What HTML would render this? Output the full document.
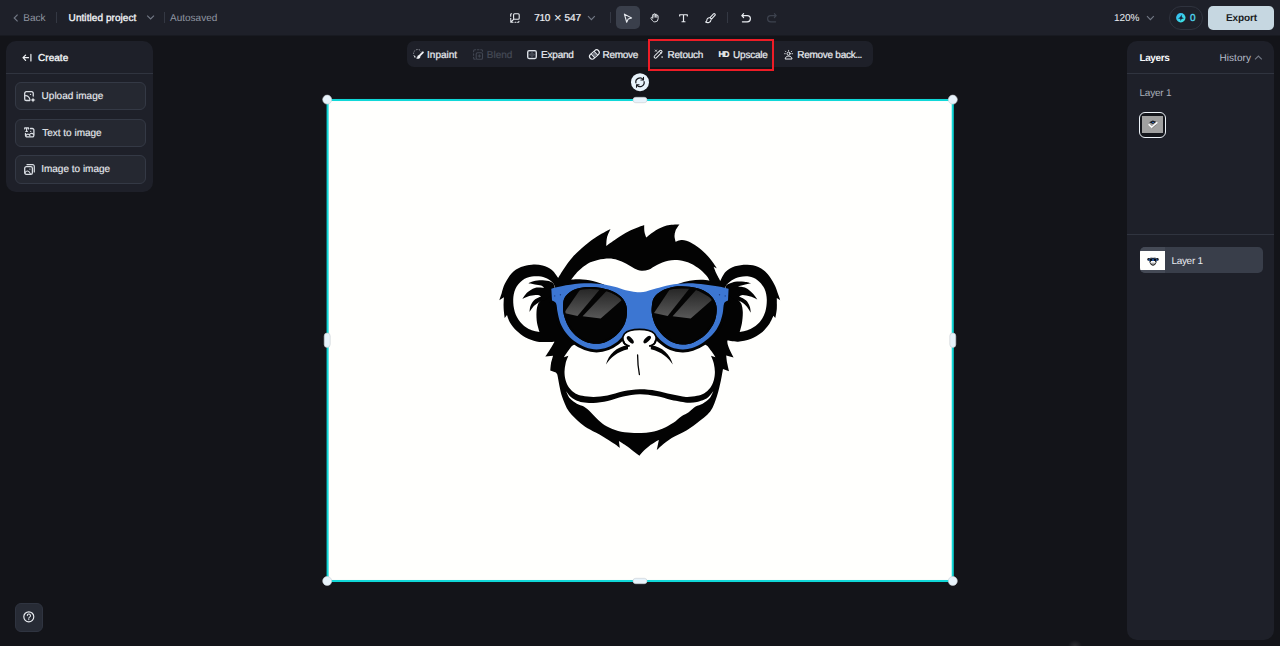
<!DOCTYPE html>
<html lang="en"><head><meta charset="utf-8"><title>Editor</title>
<style>
*{box-sizing:border-box;margin:0;padding:0}
html,body{width:1280px;height:646px;overflow:hidden;background:#131419;font-family:"Liberation Sans",sans-serif;color:#e6e9ef;font-size:10px;text-rendering:geometricPrecision}
.abs{position:absolute}
#top{position:absolute;left:0;top:0;width:1280px;height:35px;background:#1e2029}
.t{position:absolute;white-space:nowrap;line-height:12px;font-size:10px}
.sb{-webkit-text-stroke:0.35px currentColor}
.m{-webkit-text-stroke:0.22px currentColor}
.panel{position:absolute;background:#1e2029;border-radius:10px}
.btn{position:absolute;left:15px;width:131px;height:28px;border:1px solid #343945;border-radius:6px;background:#252831}
.btn .t{left:26.5px;top:7.5px;color:#e6e9ee;-webkit-text-stroke:0.15px currentColor}
.btn svg{position:absolute;left:8.5px;top:8px}
svg{display:block;overflow:visible;position:absolute}
.ic{fill:none;stroke:#e9ecf1;stroke-width:1.15;stroke-linecap:round;stroke-linejoin:round}
.tb{position:absolute;top:49.7px;color:#e9ecf1}
</style></head><body>
<div id="top">
  <svg style="left:12px;top:12.7px" width="8" height="10" viewBox="0 0 8 10"><path d="M5.6 1.6L2.2 5l3.4 3.4" fill="none" stroke="#727885" stroke-width="1.15"/></svg>
  <div class="t" style="left:23.3px;top:12.9px;color:#9096a2">Back</div>
  <div class="abs" style="left:56px;top:12px;width:1px;height:11px;background:#343843"></div>
  <div class="t sb" style="left:68.6px;top:12.9px;color:#f1f3f6;letter-spacing:0.07px">Untitled project</div>
  <svg style="left:146px;top:14px" width="9" height="7" viewBox="0 0 9 7"><path d="M1.2 1.6l3.4 3.4L8 1.6" fill="none" stroke="#727885" stroke-width="1.15"/></svg>
  <div class="abs" style="left:164px;top:12px;width:1px;height:11px;background:#343843"></div>
  <div class="t" style="left:170px;top:12.9px;color:#9096a2">Autosaved</div>

  <!-- center tools -->
  <svg style="left:510px;top:12.5px" width="10" height="10" viewBox="0 0 10 10"><g class="ic" style="stroke-width:1.1"><rect x="3.6" y="0.7" width="5.6" height="5.6" rx="1"/><path d="M0.7 3.2V1.6a.9.9 0 0 1 .9-.9M0.7 5.2v1M8.9 8.2v.4a.7.7 0 0 1-.7.7h-.6M5 9.3h1" /><path d="M3.6 6.4L0.9 9.1M0.8 7v2.2H3" /></g></svg>
  <div class="t m" style="left:534.3px;top:12.9px;color:#eef0f4;letter-spacing:-0.35px">710</div><div class="t" style="left:554px;top:12.3px;color:#eef0f4;font-size:13px">×</div><div class="t m" style="left:564.6px;top:12.9px;color:#eef0f4;letter-spacing:-0.05px">547</div>
  <svg style="left:587px;top:15px" width="9" height="7" viewBox="0 0 9 7"><path d="M1 1.2l3.4 3.4L7.8 1.2" fill="none" stroke="#727885" stroke-width="1.15"/></svg>
  <div class="abs" style="left:610px;top:12px;width:1px;height:11px;background:#343843"></div>
  <div class="abs" style="left:616px;top:6px;width:24px;height:23px;border-radius:5px;background:#3a3f4b"></div>
  <svg style="left:623px;top:12.5px" width="10" height="10.4" viewBox="0 0 10 11"><path class="ic" d="M1.2 1.2L8.8 5.2L5.2 6.3L3.6 9.8Z"/></svg>
  <svg style="left:649.7px;top:13px" width="9.6" height="9.6" viewBox="0 0 11 11"><path class="ic" style="stroke-width:1.05" d="M3 5.6V2.4a.8.8 0 0 1 1.6 0V1.6a.8.8 0 0 1 1.6 0v.6a.8.8 0 0 1 1.6 0v1a.8.8 0 0 1 1.5 0v3.4a3.6 3.6 0 0 1-3.6 3.6H5.4A3 3 0 0 1 2.9 8.8L1.1 6.2a.8.8 0 0 1 1.3-.9L3 6M4.6 2.4v2.4M6.2 2.2v2.6M7.8 3.2v1.8"/></svg>
  <svg style="left:679px;top:13.8px" width="9" height="8.4" viewBox="0 0 9 9" preserveAspectRatio="none"><path class="ic" style="stroke-width:1.2" d="M0.7 2.2V0.8H8.3V2.2M4.5 0.8V8.3M3 8.3H6"/></svg>
  <svg style="left:705px;top:12.5px" width="11" height="11" viewBox="0 0 11 11"><g class="ic" style="stroke-width:1.1"><path d="M9.9 0.9a1 1 0 0 0-1.4 0L5 4.6l1.5 1.5L9.9 2.4a1 1 0 0 0 0-1.5z"/><path d="M4.6 4.8C3 4.6 1.9 5.6 1.9 7c0 1.2-.7 1.8-1.3 2.1 1.6.8 5.4.8 5.4-2.3"/></g></svg>
  <div class="abs" style="left:727px;top:12px;width:1px;height:11px;background:#343843"></div>
  <svg style="left:740.5px;top:12.7px" width="10" height="10" viewBox="0 0 10 10"><path class="ic" style="stroke-width:1.2" d="M2.6 0.7L0.8 2.6L2.6 4.5M1 2.6H6.3a3.1 3.1 0 0 1 0 6.2H1.4"/></svg>
  <svg style="left:766.5px;top:12.7px" width="10" height="10" viewBox="0 0 10 10"><path class="ic" style="stroke-width:1.2;stroke:#3d424e" d="M7.4 0.7L9.2 2.6L7.4 4.5M9 2.6H3.7a3.1 3.1 0 0 0 0 6.2H8.6"/></svg>

  <!-- right -->
  <div class="t" style="left:1114px;top:12.9px;color:#e9ecf1;letter-spacing:-0.1px">120%</div>
  <svg style="left:1145.5px;top:14.5px" width="9" height="7" viewBox="0 0 9 7"><path d="M1 1.2l3.4 3.4L7.8 1.2" fill="none" stroke="#727885" stroke-width="1.15"/></svg>
  <div class="abs" style="left:1168.5px;top:6px;width:34.5px;height:23.5px;border:1px solid #2f333e;border-radius:12px"></div>
  <svg style="left:1176px;top:12.8px" width="10" height="10" viewBox="0 0 10 10"><defs><linearGradient id="cg" x1="0" y1="0" x2="1" y2="1"><stop offset="0" stop-color="#35b6f5"/><stop offset="1" stop-color="#3eeae0"/></linearGradient></defs><circle cx="4.8" cy="4.8" r="4.7" fill="url(#cg)"/><path d="M5.6 1.8L5.9 4.2L8 5.2L5.6 5.9L4.6 8L4.2 5.8L2 5.4L4 4.2Z" fill="#16233a"/></svg>
  <div class="t sb" style="left:1190px;top:12.9px;color:#4fd3ec">0</div>
  <div class="abs" style="left:1208px;top:6px;width:66px;height:23.5px;border-radius:5px;background:#c6d7e1"></div>
  <div class="t" style="left:1226px;top:12.9px;color:#1a1d24;font-weight:bold;font-size:10px;letter-spacing:-0.1px">Export</div>
</div>

<div class="abs" style="left:0;top:35px;width:1280px;height:1px;background:#181a21"></div>
<!-- left panel -->
<div class="panel" style="left:6px;top:41px;width:147px;height:151px"></div>
<svg style="left:21.5px;top:53px" width="10" height="10" viewBox="0 0 10 10"><path class="ic" style="stroke-width:1.2;stroke:#f1f3f6" d="M3.6 2.1L1 4.7L3.6 7.3M1.2 4.7H6.5M8.9 1.4V8"/></svg>
<div class="t sb" style="left:38px;top:53px;color:#f4f6f8;letter-spacing:0.05px">Create</div>
<div class="abs" style="left:6px;top:73px;width:147px;height:1px;background:#30343f"></div>
<div class="btn" style="top:82px"><svg style="left:7.8px;top:7.6px" width="11" height="11" viewBox="0 0 11 11"><g class="ic" style="stroke-width:1.3;stroke:#d9dde3"><path d="M9.25 5V2.3A1.6 1.6 0 0 0 7.65.7H2.3A1.6 1.6 0 0 0 .7 2.3v5.6A1.6 1.6 0 0 0 2.3 9.5h3.4"/><path d="M1 4.8C3.2 4.2 5.4 5.8 6 8.8" stroke-width="1.15"/><circle cx="6.5" cy="3.4" r=".7" fill="#d9dde3" stroke="none"/><path d="M9 6.5L9.7 8.3L11.5 9L9.7 9.7L9 11.5L8.3 9.7L6.5 9L8.3 8.3Z" fill="#eef1f5" stroke="none"/></g></svg><div class="t" style="left:25.6px;top:8.1px">Upload image</div></div>
<div class="btn" style="top:119px"><svg style="left:7.8px;top:6.9px" width="11" height="11" viewBox="0 0 11 11"><g class="ic" style="stroke-width:1.3;stroke:#d9dde3"><path d="M.7 1.9V.9H4.5V1.9M2.6.9V4.5M1.8 4.5H3.4" stroke-width="1.2"/><path d="M6.4 1.5H8.3A1.6 1.6 0 0 1 9.9 3.1V8.3A1.6 1.6 0 0 1 8.3 9.9H3.1A1.6 1.6 0 0 1 1.5 8.3V6.4"/><path d="M1.8 8.6C3 6.6 4.8 6.6 6 8.8M5.4 7.6C6.6 6 8.4 6 9.6 7.4" stroke-width="1.1"/><circle cx="6.7" cy="4.3" r=".65" fill="#d9dde3" stroke="none"/></g></svg><div class="t" style="left:26.2px;top:8px">Text to image</div></div>
<div class="btn" style="top:155px;height:28.5px"><svg style="left:7.8px;top:8px" width="11" height="11" viewBox="0 0 11 11"><g class="ic" style="stroke-width:1.3;stroke:#d9dde3"><rect x=".7" y="2.7" width="7.7" height="7.6" rx="1.6"/><path d="M3 .7H8.6A1.7 1.7 0 0 1 10.3 2.4V8" stroke-width="1.2"/><path d="M1 8.6C2.6 6.2 5 6.4 6.4 9.9" stroke-width="1.1"/><circle cx="5.9" cy="5.1" r=".65" fill="#d9dde3" stroke="none"/></g></svg><div class="t" style="left:25.2px;top:8.4px">Image to image</div></div>

<!-- toolbar -->
<div class="abs" style="left:407px;top:41px;width:466px;height:26px;border-radius:7px;background:#1e2029"></div>
<svg style="left:413px;top:48.8px" width="11" height="11" viewBox="0 0 11 11"><circle cx="4.7" cy="4.6" r="4.1" fill="none" stroke="#c4c8d0" stroke-width="1" stroke-dasharray="1 1.5"/><path d="M9.9 3.2L5.2 8.2" stroke="#1e2029" stroke-width="3.2" stroke-linecap="round"/><path d="M9.9 3.3L6.9 6.3" stroke="#f1f3f6" stroke-width="1.9" stroke-linecap="round"/><path d="M6.7 6.1C5.4 5.9 4.3 6.8 4.3 8C4.3 8.7 3.7 9.2 3.1 9.4C4.7 10.2 7.6 9.7 7.4 7.2Z" fill="#f1f3f6"/><circle cx="1.7" cy="7.7" r=".7" fill="#f1f3f6"/></svg>
<div class="t tb m" style="left:427px;letter-spacing:0.02px">Inpaint</div>
<svg style="left:472.7px;top:48.8px" width="10" height="11" viewBox="0 0 10 11"><g class="ic" style="stroke-width:1.1;stroke:#414652"><path d="M2.6.7H1.9A1.3 1.3 0 0 0 .6 2V2.7M.6 4.7V6.3M.6 8.3V9A1.3 1.3 0 0 0 1.9 10.3H2.2M4.4.7H6M7.8.7H8.3A1.3 1.3 0 0 1 9.6 2V2.2" /><rect x="3.2" y="3.7" width="6.3" height="6.6" rx="1.3"/><path d="M6.35 5.8V8.2M5.15 7H7.55" stroke-width="1"/></g></svg>
<div class="t tb m" style="left:486.8px;color:#454a56">Blend</div>
<svg style="left:527px;top:49.8px" width="10" height="9.2" viewBox="0 0 10 9.2"><g class="ic" style="stroke-width:1.25;stroke:#dfe3e9"><rect x=".65" y=".65" width="8.7" height="7.9" rx="1.5" fill="#454954"/><path d="M2.7 3.4v-.9h.9M6.4 2.5h.9v.9M7.3 5.8v.9h-.9M3.6 6.7h-.9v-.9" stroke="#1e2029" stroke-width="1.1"/></g></svg>
<div class="t tb m" style="left:541px;letter-spacing:-0.2px">Expand</div>
<svg style="left:588.6px;top:48.8px" width="11" height="11" viewBox="0 0 11 11"><g transform="rotate(-42 5.4 5.5)"><rect x="-.2" y="2.8" width="11.2" height="5.4" rx="2.7" class="ic" stroke-width="1.25"/><rect x="3.8" y="3.4" width="3.2" height="4.2" fill="#6d717b"/><path class="ic" style="stroke-width:1" d="M3.4 3v5M7.4 3v5"/></g></svg>
<div class="t tb m" style="left:602.5px;letter-spacing:-0.28px">Remove</div>
<svg style="left:654px;top:49.4px" width="10" height="10" viewBox="0 0 11 11"><g class="ic" style="stroke-width:1.1"><rect x="-.8" y="4.1" width="10.8" height="2.9" rx="1.2" transform="rotate(-45 4.8 5.8)"/><path d="M6 2.8l2 2M1.4 1.1l1.5 1.5M1.4 2.6l1.5-1.5" stroke-width=".9"/><circle cx="8.9" cy="8.9" r=".9" fill="#e9ecf1" stroke="none"/></g></svg>
<div class="t tb m" style="left:667.5px;letter-spacing:-0.22px">Retouch</div>
<div class="t tb m" style="left:718.4px;top:48.5px;font-weight:bold;font-size:8.2px;letter-spacing:-0.75px;color:#f1f3f6">HD</div>
<div class="t tb m" style="left:733px;letter-spacing:-0.2px">Upscale</div>
<svg style="left:783.8px;top:49.7px" width="9.2" height="9.2" viewBox="0 0 10 10"><g class="ic" style="stroke-width:1.05"><circle cx="5" cy="4" r="1.7"/><path d="M1.3 9.4c.2-1.8 1.7-2.7 3.7-2.7s3.5.9 3.7 2.7z"/><path d="M5 .4v.7M1.5 1.3l.6.6M8.5 1.3l-.6.6M.6 4h.8M8.6 4h.8" stroke-width=".9"/></g></svg>
<div class="t tb m" style="left:797.3px;letter-spacing:-0.28px">Remove back<span style="letter-spacing:-0.7px">...</span></div>
<div class="abs" style="left:648px;top:38.7px;width:126.3px;height:32.3px;border:2.2px solid #ee1c26"></div>

<!-- right panel -->
<div class="panel" style="left:1127px;top:41px;width:147px;height:599px"></div>
<div class="t" style="left:1139.5px;top:53.2px;color:#f6f7f9;font-weight:bold;letter-spacing:-0.4px">Layers</div>
<div class="t" style="left:1219.5px;top:53.1px;color:#b6bdc9;letter-spacing:0.05px">History</div>
<svg style="left:1254px;top:54px" width="9" height="7" viewBox="0 0 9 7"><path d="M1 5.4l3.4-3.4L7.8 5.4" fill="none" stroke="#727885" stroke-width="1.15"/></svg>
<div class="abs" style="left:1127px;top:73.3px;width:147px;height:1px;background:#30343f"></div>
<div class="t" style="left:1139.5px;top:87.8px;color:#a9afba;letter-spacing:-0.22px">Layer 1</div>
<div class="abs" style="left:1139.2px;top:111.9px;width:26.5px;height:26.5px;border:1.8px solid #edf3f9;border-radius:6px;background:#14161c"></div>
<div class="abs" style="left:1142px;top:116px;width:21px;height:17px;background:#a0a0a0"></div>
<svg style="left:1146.5px;top:119.8px" width="12" height="9" viewBox="0 0 12 9"><path d="M2.2 2.2L5.8.4 9.2 1.8 6 3.9z" fill="#15171c"/><path d="M5 2.3l2 .2" stroke="#2d6fd0" stroke-width=".9"/><path d="M1.6 4.3l3.2 2.9L10.3 2.3" fill="none" stroke="#fdfdfd" stroke-width="1.5"/><path d="M5.2 8.2L9.6 4.6" stroke="#7d7d7d" stroke-width=".8"/></svg>
<div class="abs" style="left:1127px;top:234.3px;width:147px;height:1px;background:#30343f"></div>
<div class="abs" style="left:1140px;top:247.3px;width:123px;height:26px;border-radius:5px;background:#393e4a;overflow:hidden"><div class="abs" style="left:0;top:0;width:25px;height:26px;background:#454a56"></div><div class="abs" style="left:0;top:3.3px;width:25px;height:19.4px;background:#fffffd"></div>
<svg style="left:6.5px;top:8.3px" width="12" height="10" viewBox="0 0 12 10"><circle cx="1.6" cy="3.4" r="1.3" fill="#111"/><circle cx="10.4" cy="3.4" r="1.3" fill="#111"/><path d="M2.2 2.8C3 .4 9 .4 9.8 2.8L9.4 6.4C8.6 8.6 7 9.6 6 9.8 5 9.6 3.4 8.6 2.6 6.4z" fill="#111"/><ellipse cx="6" cy="6.6" rx="2.6" ry="2" fill="#fff"/><path d="M3 1.9Q6 1 9 1.9" stroke="#fff" stroke-width=".8" fill="none"/><rect x="1.6" y="2.7" width="8.8" height="2.2" rx=".9" fill="#2f6fd0"/><ellipse cx="4" cy="3.9" rx="1.5" ry="1.1" fill="#0a0a0a"/><ellipse cx="8" cy="3.9" rx="1.5" ry="1.1" fill="#0a0a0a"/><path d="M3.8 7.4Q6 6.9 8.2 7.4" stroke="#111" stroke-width=".5" fill="none"/></svg></div>
<div class="t" style="left:1171.4px;letter-spacing:-0.3px;top:256px;color:#e8ebf0">Layer 1</div>

<!-- help -->
<div class="abs" style="left:14.5px;top:603px;width:28.5px;height:28.5px;border-radius:6px;background:#272b35;border:1px solid #2f3440"></div>
<svg style="left:23px;top:611.1px" width="12" height="12" viewBox="0 0 12 12"><g class="ic" style="stroke-width:1.15"><circle cx="5.8" cy="5.8" r="5"/><path d="M4.3 4.6a1.6 1.6 0 1 1 2.3 1.5c-.5.3-.8.6-.8 1.2" stroke-width="1.05"/><circle cx="5.8" cy="8.6" r=".6" fill="#e9ecf1" stroke="none"/></g></svg>

<div class="abs" style="left:1068px;top:640px;width:14px;height:12px;background:radial-gradient(closest-side,#2e2e32,rgba(19,20,25,0))"></div>
<!-- canvas -->
<svg style="left:0;top:0" width="1280" height="646" viewBox="0 0 1280 646">
<rect x="327.6" y="100" width="625.15" height="481" fill="#fffffd" stroke="#10d8d8" stroke-width="2.05"/>
<defs>
<linearGradient id="hl" x1="0" y1="0" x2="0" y2="1"><stop offset="0" stop-color="#262626"/><stop offset="1" stop-color="#585858"/></linearGradient>
<clipPath id="cl"><path d="M563.1 306.2C563.2 303.4 563.1 300.4 564.5 297.9C565.9 295.3 568.6 292.6 571.5 290.9C574.5 289.1 578.8 287.9 582.6 287.4C587.0 286.8 593.0 286.8 597.9 287.4C602.7 288.0 607.9 289.3 611.9 290.9C615.5 292.4 619.2 294.6 621.6 297.2C624.0 299.7 625.7 302.9 626.5 306.2C627.3 309.6 627.1 313.9 626.5 317.4C625.9 320.8 624.7 324.1 623.0 327.1C621.2 330.1 618.7 333.1 616.0 335.5C613.2 337.9 609.5 340.3 606.3 341.7C603.2 343.0 599.8 343.8 596.5 343.8C593.0 343.8 588.9 343.1 585.4 341.7C581.9 340.3 578.4 338.1 575.6 335.5C572.7 332.8 570.0 329.2 568.0 325.7C566.1 322.3 564.6 317.9 563.8 314.6C563.1 311.9 563.0 309.0 563.1 306.2Z"/></clipPath><clipPath id="cr"><path d="M651.7 307.6C652.0 304.8 652.2 300.7 653.8 297.9C655.4 295.1 658.5 292.6 661.5 290.9C664.9 289.0 669.7 287.4 674.0 286.7C678.6 286.0 684.4 286.1 689.3 286.7C694.0 287.3 699.4 288.4 703.2 290.2C706.7 291.8 710.1 294.5 712.3 297.2C714.4 299.7 715.9 302.9 716.5 306.2C717.1 309.6 716.6 313.9 715.8 317.4C715.0 320.8 713.5 324.1 711.6 327.1C709.7 330.1 707.4 333.1 704.6 335.5C701.6 338.1 697.2 340.9 693.5 342.4C690.0 343.8 686.1 344.6 682.4 344.5C678.7 344.4 674.6 343.3 671.2 341.7C667.8 340.1 664.8 337.5 662.2 334.8C659.5 332.0 656.9 328.4 655.2 325.0C653.6 321.8 652.6 317.5 652.0 314.6C651.5 312.3 651.4 309.9 651.7 307.6Z"/></clipPath>
<clipPath id="lowclip"><rect x="540" y="302" width="200" height="60"/></clipPath>
</defs>
<path fill="#030303" d="M558.1 277.9C558.1 277.9 562.0 271.5 564.1 268.4C566.5 264.9 569.4 260.7 572.5 257.2C576.0 253.3 581.0 248.7 585.2 245.2C589.2 241.9 593.6 238.8 597.8 236.1C601.9 233.5 610.5 229.1 610.5 229.1C610.5 229.1 607.7 234.7 607.0 237.5C606.3 240.2 606.3 245.9 606.3 245.9C606.3 245.9 612.7 241.1 616.1 238.9C619.9 236.4 624.4 233.4 628.8 231.2C633.5 228.9 644.2 225.1 644.2 225.1C644.2 225.1 644.1 229.8 644.5 231.9C644.8 233.8 646.3 237.5 646.3 237.5C646.3 237.5 652.2 232.5 655.5 230.5C658.9 228.5 662.7 226.5 666.7 225.5C670.7 224.5 679.4 224.6 679.4 224.6C679.4 224.6 676.4 228.6 675.6 230.5C674.9 232.3 674.5 234.2 674.5 236.1C674.5 238.0 675.6 241.7 675.6 241.7C675.6 241.7 679.9 239.9 682.2 240.0C684.7 240.1 688.0 241.2 690.6 242.4C693.4 243.7 696.4 245.9 699.1 248.0C701.9 250.2 705.2 253.3 707.5 255.8C709.6 258.0 711.5 260.7 713.1 262.8C714.5 264.7 717.0 268.6 717.0 268.6L713.6 266.8C713.6 266.8 715.5 271.7 716.6 274.1C717.7 276.5 720.3 281.0 720.3 281.0C720.3 281.0 723.2 274.1 725.7 271.7C728.2 269.2 731.6 267.4 735.0 266.3C738.6 265.1 743.5 264.6 747.4 264.7C751.1 264.8 754.9 265.4 758.3 267.0C761.7 268.6 765.0 271.1 767.6 274.0C770.3 277.0 772.7 281.3 774.5 284.8C776.2 288.0 777.4 292.3 778.4 294.9C779.1 296.7 780.3 300.3 780.3 300.3L776.8 298.0C776.8 298.0 777.0 305.4 776.8 308.8C776.6 311.9 775.3 318.1 775.3 318.1L773.4 315.8C773.4 315.8 770.9 321.7 769.1 324.3C767.1 327.1 764.4 330.4 761.4 332.8C758.3 335.2 754.4 337.5 750.5 339.0C746.6 340.5 742.0 341.4 738.1 341.7C734.5 341.9 727.3 340.6 727.3 340.6C727.3 340.6 727.3 342.8 727.6 343.9C728.1 345.7 729.5 349.3 730.5 351.6C731.4 353.6 733.6 357.5 733.6 357.5L726.2 355.5C726.2 355.5 726.7 360.7 727.2 363.2C727.7 365.8 729.0 371.2 729.0 371.2L723.0 369.0C723.0 369.0 721.7 376.8 720.9 380.6C719.9 385.1 718.7 391.1 717.0 396.1C715.2 401.3 713.6 407.1 710.2 411.6C706.8 416.1 701.1 419.8 696.7 423.2C692.5 426.4 687.8 429.6 683.6 432.1C679.8 434.4 675.2 436.0 671.7 438.1C668.4 440.1 664.8 442.9 662.3 444.9C660.3 446.5 656.8 450.0 656.8 450.0L658.9 439.8C658.9 439.8 652.3 443.7 649.6 445.7C647.2 447.5 644.5 450.0 642.8 451.7C641.5 452.9 639.4 455.8 639.4 455.8C639.4 455.8 636.5 453.7 635.1 452.6C633.1 451.1 630.1 448.5 627.4 446.6C624.7 444.7 618.9 441.1 618.9 441.1L619.8 447.9C619.8 447.9 616.5 445.2 614.7 444.0C611.9 442.1 606.9 438.8 602.8 436.4C598.7 434.0 593.7 431.8 590.0 429.6C586.7 427.7 583.5 425.7 580.6 423.2C577.1 420.2 572.1 416.0 569.0 411.6C565.9 407.2 563.8 401.2 562.2 396.9C560.9 393.3 560.2 389.4 559.4 385.7C558.6 382.0 557.9 376.8 557.3 374.6C557.1 373.8 555.9 372.5 555.9 372.5L550.3 370.4C550.3 370.4 550.6 365.7 551.0 363.4C551.5 361.0 553.1 355.8 553.1 355.8L545.4 356.5C545.4 356.5 547.3 353.7 548.2 352.3C549.2 350.7 550.7 348.4 551.7 346.7C552.7 345.1 554.5 341.8 554.5 341.8C554.5 341.8 549.7 342.2 547.3 342.1C544.3 342.0 540.0 342.1 536.5 341.4C532.9 340.6 529.0 339.3 525.6 337.5C522.2 335.7 518.9 332.9 516.3 330.5C513.9 328.2 511.7 325.4 510.1 322.8C508.7 320.4 507.0 315.0 507.0 315.0L504.7 318.1C504.7 318.1 503.7 310.8 503.6 307.3C503.5 303.9 503.9 297.2 503.9 297.2L499.3 300.3C499.3 300.3 500.8 295.7 501.6 293.4C502.5 290.7 503.2 287.0 504.7 284.1C506.4 280.7 509.0 276.1 511.7 273.2C514.3 270.5 517.6 268.4 521.0 267.0C524.4 265.6 528.2 264.9 531.8 264.7C535.4 264.4 539.2 264.6 542.6 265.5C545.9 266.4 549.3 268.0 551.9 270.1C554.5 272.2 558.1 277.9 558.1 277.9Z"/>
<path fill="#fffffd" d="M571.1 279.7C571.1 279.7 575.5 273.8 578.1 271.2C580.9 268.6 584.7 265.4 588.0 263.5C591.0 261.8 594.4 260.8 597.8 260.0C601.3 259.2 605.8 258.6 609.1 258.6C611.9 258.6 614.8 259.2 617.5 260.0C620.3 260.8 623.2 262.1 625.9 263.5C628.7 264.9 631.8 267.2 634.4 268.4C636.6 269.5 639.1 270.6 641.4 270.8C643.7 271.0 646.2 270.6 648.4 269.8C651.0 268.8 653.9 266.3 656.9 264.9C660.2 263.4 664.4 261.5 668.1 260.7C671.8 259.9 675.7 259.8 679.4 260.3C683.1 260.8 687.1 261.9 690.6 263.5C694.1 265.1 697.7 267.6 700.5 269.8C703.1 271.9 706.0 275.0 707.5 276.9C708.5 278.1 709.6 281.1 709.6 281.1L705.0 300.0L640.0 310.0L575.0 300.0L571.1 279.7Z"/>
<path fill="#fffffd" d="M553.5 283.3C553.5 283.3 550.6 280.4 548.8 279.4C546.7 278.3 543.8 277.0 541.1 276.6C538.3 276.1 534.8 276.0 531.8 276.6C528.7 277.2 525.2 278.2 522.5 280.2C519.8 282.2 517.0 285.5 515.5 288.7C514.0 291.9 513.3 295.9 513.2 299.6C513.1 303.5 513.6 308.2 514.8 311.9C515.9 315.5 517.9 319.1 520.2 322.0C522.5 324.8 525.5 327.3 528.7 329.0C531.9 330.7 539.5 332.1 539.5 332.1C539.5 332.1 537.5 326.0 537.0 322.8C536.5 319.4 536.3 315.0 536.5 311.9C536.6 309.3 537.2 306.1 538.0 304.2C538.6 302.7 541.1 300.3 541.1 300.3L556.0 290.0L553.5 283.3Z"/>
<path fill="#030303" d="M553.5 283.3C553.5 283.3 550.5 281.4 548.8 281.0C546.5 280.5 542.3 280.1 539.5 280.2C536.9 280.3 533.7 281.2 531.8 281.7C530.4 282.1 527.9 283.3 527.9 283.3C527.9 283.3 532.7 284.0 534.9 284.4C537.0 284.8 539.5 285.0 541.1 285.6C542.3 286.1 544.2 287.9 544.2 287.9C544.2 287.9 537.7 287.1 534.9 287.9C532.1 288.7 529.3 290.8 527.2 292.6C525.3 294.3 522.5 298.8 522.5 298.8C522.5 298.8 527.7 296.4 530.3 295.7C532.8 295.1 536.2 294.8 538.0 294.9C539.2 295.0 541.1 296.5 541.1 296.5C541.1 296.5 536.6 298.1 534.9 299.6C533.1 301.1 531.5 303.6 530.6 305.7C529.8 307.6 529.5 311.9 529.5 311.9C529.5 311.9 532.4 307.4 534.1 305.7C535.7 304.1 537.7 302.8 539.5 301.9C541.2 301.0 545.0 300.0 545.0 300.0L556.0 292.0L553.5 283.3Z"/>
<path fill="#fffffd" d="M726.5 284.8C726.5 284.8 729.9 281.4 731.9 280.2C734.1 278.9 737.0 277.7 739.7 277.1C742.6 276.5 746.0 276.1 749.0 276.6C752.0 277.1 755.1 278.3 757.5 280.2C760.1 282.2 763.0 285.5 764.5 288.7C766.0 291.9 766.7 295.9 766.8 299.6C766.9 303.5 766.4 308.2 765.2 311.9C764.1 315.5 762.2 319.1 759.8 322.0C757.3 324.9 753.9 327.3 750.5 329.0C747.2 330.7 739.7 332.1 739.7 332.1C739.7 332.1 741.5 326.0 742.0 322.8C742.5 319.4 742.9 315.0 742.8 311.9C742.7 309.3 742.2 306.1 741.5 304.2C740.9 302.7 738.5 300.3 738.5 300.3L724.0 290.0L726.5 284.8Z"/>
<path fill="#030303" d="M726.5 284.8C726.5 284.8 732.0 282.2 735.0 281.7C738.0 281.2 741.6 281.4 744.3 281.7C746.7 281.9 751.3 283.3 751.3 283.3C751.3 283.3 746.5 284.3 744.3 284.8C742.2 285.3 738.1 286.4 738.1 286.4C738.1 286.4 743.5 286.8 745.9 287.9C748.3 289.1 750.9 291.4 752.8 293.4C754.6 295.2 757.5 299.6 757.5 299.6C757.5 299.6 752.9 297.3 750.5 296.5C748.0 295.7 744.7 294.9 742.8 294.9C741.4 294.9 738.9 296.5 738.9 296.5C738.9 296.5 744.1 298.6 745.9 300.3C747.7 301.9 748.9 304.4 749.7 306.5C750.5 308.5 750.8 312.7 750.8 312.7C750.8 312.7 748.2 308.3 746.7 306.5C745.2 304.7 743.5 303.0 741.5 301.9C739.5 300.8 735.0 300.0 735.0 300.0L724.0 292.0L726.5 284.8Z"/>
<path fill="#fffffd" d="M571.9 346.0C571.9 346.0 569.0 349.7 567.7 351.6C566.4 353.4 564.0 357.2 564.0 357.2L568.4 355.8C568.4 355.8 566.2 360.8 565.6 363.4C565.0 366.1 564.5 369.0 564.5 371.8C564.5 374.6 564.8 377.5 565.6 380.2C566.4 382.9 567.5 385.6 569.1 387.8C570.7 390.0 573.2 392.1 575.4 393.4C577.5 394.7 580.0 395.3 582.4 395.8C585.4 396.4 589.8 396.9 593.5 396.9C597.7 396.8 602.8 396.4 607.4 395.5C612.4 394.6 617.8 392.3 623.2 391.3C628.6 390.3 634.1 389.4 639.6 389.3C645.1 389.2 650.7 389.9 656.0 390.7C661.2 391.5 666.5 393.2 671.5 394.2C676.3 395.2 681.8 396.6 686.0 396.9C689.7 397.1 694.0 396.4 697.0 395.8C699.4 395.3 701.9 394.7 704.0 393.4C706.2 392.1 708.7 390.0 710.3 387.8C711.9 385.6 713.0 382.9 713.8 380.2C714.6 377.5 714.9 374.6 714.9 371.8C714.9 369.0 714.4 366.1 713.8 363.4C713.2 360.8 711.0 355.8 711.0 355.8L715.4 357.2C715.4 357.2 713.0 353.4 711.7 351.6C710.4 349.7 707.5 346.0 707.5 346.0L690.0 335.0L640.0 325.0L590.0 335.0L571.9 346.0Z"/>
<path fill="#fffffd" d="M566.0 391.0C566.0 391.0 568.0 396.2 569.8 398.3C571.6 400.4 574.5 402.4 576.8 403.8C579.0 405.1 581.6 405.3 583.8 406.6C586.1 408.0 588.5 410.2 590.7 412.2C593.2 414.5 595.8 417.8 598.5 420.2C601.2 422.5 603.9 424.9 607.0 426.6C610.3 428.4 614.3 429.9 618.1 430.9C622.1 431.9 627.1 432.4 630.9 432.8C634.3 433.1 637.7 433.1 641.1 433.0C644.5 432.9 648.0 432.7 651.3 432.0C654.8 431.3 658.8 430.2 662.3 428.7C666.0 427.2 670.1 424.9 673.4 422.8C676.4 420.8 679.3 417.8 681.9 416.0C684.0 414.5 686.6 413.7 688.7 412.2C691.0 410.6 693.3 408.0 695.6 406.6C697.8 405.3 700.4 405.1 702.6 403.8C704.9 402.4 707.8 400.4 709.6 398.3C711.4 396.2 713.4 391.0 713.4 391.0C713.4 391.0 710.0 395.6 708.5 397.0C707.3 398.1 705.9 398.9 704.4 399.5C702.5 400.3 699.5 401.4 697.0 401.9C694.4 402.4 691.6 402.9 688.9 402.7C684.6 402.4 677.0 401.0 671.5 399.9C666.3 398.8 661.2 396.9 656.0 396.0C650.7 395.1 645.1 394.1 639.6 394.2C634.1 394.3 628.5 395.5 623.2 396.6C617.9 397.7 612.7 400.0 607.7 401.1C603.0 402.1 597.7 402.8 593.5 403.0C589.8 403.2 585.4 402.8 582.4 402.3C580.0 401.9 577.4 400.9 575.4 400.0C573.6 399.2 571.9 398.1 570.5 396.8C568.9 395.3 566.0 391.0 566.0 391.0Z"/>
<path fill="#030303" d="M565 287L571 279.6C576 278.6 590 278.8 604 284.4L604 291L565 293Z"/>
<path fill="#030303" d="M715 287L709.8 280.8C702 279 690 279.6 678 284L678 291L715 293Z"/>
<path fill="#030303" stroke="#030303" stroke-width="6" stroke-linejoin="round" d="M551.3 288.8C551.3 288.8 561.0 286.1 565.9 285.3C571.4 284.4 578.2 283.4 584.0 283.2C589.6 283.0 595.6 283.3 600.7 283.9C605.4 284.4 610.4 285.6 614.6 286.7C618.4 287.7 622.3 289.3 625.8 290.2C629.0 291.0 633.0 291.7 635.5 292.0C637.2 292.2 638.8 292.3 640.5 292.2C642.3 292.1 644.3 291.9 646.1 291.5C648.7 290.9 652.6 289.5 655.9 288.6C659.8 287.5 665.1 285.7 669.8 284.9C675.1 284.0 682.1 283.3 687.9 283.2C693.5 283.1 699.5 283.8 704.6 284.4C709.3 284.9 714.6 285.8 718.6 286.5C722.0 287.1 728.6 288.8 728.6 288.8L728.0 300.6C728.0 300.6 724.7 301.9 724.1 303.4C723.2 305.5 723.4 310.0 722.7 313.2C721.9 316.7 720.9 320.8 719.3 324.3C717.7 327.8 715.6 331.2 713.0 334.1C710.3 337.1 706.7 340.1 703.2 342.4C699.7 344.7 695.6 346.8 692.1 348.0C689.0 349.0 685.7 349.5 682.4 349.4C678.9 349.3 674.7 348.7 671.2 347.3C667.7 345.9 664.3 343.2 661.5 341.0C658.9 339.0 656.6 335.8 654.5 334.1C652.8 332.7 650.9 331.4 648.9 330.6C646.8 329.8 644.0 329.4 642.0 329.2C640.3 329.0 638.6 328.9 636.9 329.2C634.9 329.6 632.1 330.4 630.0 331.3C628.0 332.2 626.1 333.4 624.4 334.8C622.3 336.5 620.0 339.7 617.4 341.7C614.6 343.8 611.2 346.0 607.7 347.3C604.2 348.6 600.2 349.4 596.5 349.4C592.8 349.4 588.9 348.6 585.4 347.3C581.7 345.9 577.5 343.4 574.2 341.0C571.1 338.7 568.2 335.7 565.9 332.7C563.6 329.7 561.7 326.4 560.3 322.9C558.9 319.4 558.2 315.1 557.5 311.8C556.9 309.0 557.0 305.3 556.1 303.4C555.4 301.9 552.0 300.6 552.0 300.6L551.3 288.8Z" clip-path="url(#lowclip)"/>
<path fill="#3c76d2" d="M551.3 288.8C551.3 288.8 561.0 286.1 565.9 285.3C571.4 284.4 578.2 283.4 584.0 283.2C589.6 283.0 595.6 283.3 600.7 283.9C605.4 284.4 610.4 285.6 614.6 286.7C618.4 287.7 622.3 289.3 625.8 290.2C629.0 291.0 633.0 291.7 635.5 292.0C637.2 292.2 638.8 292.3 640.5 292.2C642.3 292.1 644.3 291.9 646.1 291.5C648.7 290.9 652.6 289.5 655.9 288.6C659.8 287.5 665.1 285.7 669.8 284.9C675.1 284.0 682.1 283.3 687.9 283.2C693.5 283.1 699.5 283.8 704.6 284.4C709.3 284.9 714.6 285.8 718.6 286.5C722.0 287.1 728.6 288.8 728.6 288.8L728.0 300.6C728.0 300.6 724.7 301.9 724.1 303.4C723.2 305.5 723.4 310.0 722.7 313.2C721.9 316.7 720.9 320.8 719.3 324.3C717.7 327.8 715.6 331.2 713.0 334.1C710.3 337.1 706.7 340.1 703.2 342.4C699.7 344.7 695.6 346.8 692.1 348.0C689.0 349.0 685.7 349.5 682.4 349.4C678.9 349.3 674.7 348.7 671.2 347.3C667.7 345.9 664.3 343.2 661.5 341.0C658.9 339.0 656.6 335.8 654.5 334.1C652.8 332.7 650.9 331.4 648.9 330.6C646.8 329.8 644.0 329.4 642.0 329.2C640.3 329.0 638.6 328.9 636.9 329.2C634.9 329.6 632.1 330.4 630.0 331.3C628.0 332.2 626.1 333.4 624.4 334.8C622.3 336.5 620.0 339.7 617.4 341.7C614.6 343.8 611.2 346.0 607.7 347.3C604.2 348.6 600.2 349.4 596.5 349.4C592.8 349.4 588.9 348.6 585.4 347.3C581.7 345.9 577.5 343.4 574.2 341.0C571.1 338.7 568.2 335.7 565.9 332.7C563.6 329.7 561.7 326.4 560.3 322.9C558.9 319.4 558.2 315.1 557.5 311.8C556.9 309.0 557.0 305.3 556.1 303.4C555.4 301.9 552.0 300.6 552.0 300.6L551.3 288.8Z"/>
<path fill="#040404" d="M563.1 306.2C563.2 303.4 563.1 300.4 564.5 297.9C565.9 295.3 568.6 292.6 571.5 290.9C574.5 289.1 578.8 287.9 582.6 287.4C587.0 286.8 593.0 286.8 597.9 287.4C602.7 288.0 607.9 289.3 611.9 290.9C615.5 292.4 619.2 294.6 621.6 297.2C624.0 299.7 625.7 302.9 626.5 306.2C627.3 309.6 627.1 313.9 626.5 317.4C625.9 320.8 624.7 324.1 623.0 327.1C621.2 330.1 618.7 333.1 616.0 335.5C613.2 337.9 609.5 340.3 606.3 341.7C603.2 343.0 599.8 343.8 596.5 343.8C593.0 343.8 588.9 343.1 585.4 341.7C581.9 340.3 578.4 338.1 575.6 335.5C572.7 332.8 570.0 329.2 568.0 325.7C566.1 322.3 564.6 317.9 563.8 314.6C563.1 311.9 563.0 309.0 563.1 306.2Z"/>
<path fill="#040404" d="M651.7 307.6C652.0 304.8 652.2 300.7 653.8 297.9C655.4 295.1 658.5 292.6 661.5 290.9C664.9 289.0 669.7 287.4 674.0 286.7C678.6 286.0 684.4 286.1 689.3 286.7C694.0 287.3 699.4 288.4 703.2 290.2C706.7 291.8 710.1 294.5 712.3 297.2C714.4 299.7 715.9 302.9 716.5 306.2C717.1 309.6 716.6 313.9 715.8 317.4C715.0 320.8 713.5 324.1 711.6 327.1C709.7 330.1 707.4 333.1 704.6 335.5C701.6 338.1 697.2 340.9 693.5 342.4C690.0 343.8 686.1 344.6 682.4 344.5C678.7 344.4 674.6 343.3 671.2 341.7C667.8 340.1 664.8 337.5 662.2 334.8C659.5 332.0 656.9 328.4 655.2 325.0C653.6 321.8 652.6 317.5 652.0 314.6C651.5 312.3 651.4 309.9 651.7 307.6Z"/>
<g clip-path="url(#cl)"><path fill="url(#hl)" d="M580.5 289L600.5 288.4L577.5 316L564 313Z"/><path fill="url(#hl)" d="M607 290.5L623 299L600.7 318.5L582.6 316.2Z"/></g>
<g clip-path="url(#cr)"><path fill="url(#hl)" d="M670 289L689.8 288L667.7 316L654 313Z"/><path fill="url(#hl)" d="M696.3 289.8L713 299L690.7 318.5L672.6 316.2Z"/></g>
<path fill="none" stroke="#040404" stroke-width="4" clip-path="url(#cl)" d="M563.1 306.2C563.2 303.4 563.1 300.4 564.5 297.9C565.9 295.3 568.6 292.6 571.5 290.9C574.5 289.1 578.8 287.9 582.6 287.4C587.0 286.8 593.0 286.8 597.9 287.4C602.7 288.0 607.9 289.3 611.9 290.9C615.5 292.4 619.2 294.6 621.6 297.2C624.0 299.7 625.7 302.9 626.5 306.2C627.3 309.6 627.1 313.9 626.5 317.4C625.9 320.8 624.7 324.1 623.0 327.1C621.2 330.1 618.7 333.1 616.0 335.5C613.2 337.9 609.5 340.3 606.3 341.7C603.2 343.0 599.8 343.8 596.5 343.8C593.0 343.8 588.9 343.1 585.4 341.7C581.9 340.3 578.4 338.1 575.6 335.5C572.7 332.8 570.0 329.2 568.0 325.7C566.1 322.3 564.6 317.9 563.8 314.6C563.1 311.9 563.0 309.0 563.1 306.2Z"/>
<path fill="none" stroke="#040404" stroke-width="4" clip-path="url(#cr)" d="M651.7 307.6C652.0 304.8 652.2 300.7 653.8 297.9C655.4 295.1 658.5 292.6 661.5 290.9C664.9 289.0 669.7 287.4 674.0 286.7C678.6 286.0 684.4 286.1 689.3 286.7C694.0 287.3 699.4 288.4 703.2 290.2C706.7 291.8 710.1 294.5 712.3 297.2C714.4 299.7 715.9 302.9 716.5 306.2C717.1 309.6 716.6 313.9 715.8 317.4C715.0 320.8 713.5 324.1 711.6 327.1C709.7 330.1 707.4 333.1 704.6 335.5C701.6 338.1 697.2 340.9 693.5 342.4C690.0 343.8 686.1 344.6 682.4 344.5C678.7 344.4 674.6 343.3 671.2 341.7C667.8 340.1 664.8 337.5 662.2 334.8C659.5 332.0 656.9 328.4 655.2 325.0C653.6 321.8 652.6 317.5 652.0 314.6C651.5 312.3 651.4 309.9 651.7 307.6Z"/>
<circle cx="554.7" cy="295.9" r="0.7" fill="#1d3f86"/>
<circle cx="560.4" cy="294.8" r="0.7" fill="#1d3f86"/>
<circle cx="719.5" cy="294.8" r="0.7" fill="#1d3f86"/>
<circle cx="725.2" cy="295.9" r="0.7" fill="#1d3f86"/>
<path fill="#fffffd" stroke="#030303" stroke-width="1.6" d="M627.5 345.6C622.5 343.5 621.5 337.5 624.5 333.8C628 330 634 329.4 639.5 329.4C645 329.4 651 330 654.5 333.8C657.5 337.5 656.5 343.5 651.5 345.6C647 347.5 644 346.2 640 346.2C636 346.2 632 347.5 627.5 345.6Z"/>
<path fill="#fffffd" d="M624 345L655 345L660 356L620 356Z"/>
<ellipse cx="630.3" cy="339.8" rx="4.6" ry="2.1" transform="rotate(48 630.3 339.8)" fill="#030303"/>
<ellipse cx="647.2" cy="339.6" rx="4.8" ry="2.1" transform="rotate(-45 647.2 339.6)" fill="#030303"/>
<path fill="none" stroke="#030303" stroke-width="1.8" stroke-linecap="round" d="M623.2 340.5C623.6 343.6 625.8 345.6 629 346"/>
<path fill="none" stroke="#030303" stroke-width="1.8" stroke-linecap="round" d="M655.6 340.5C655.2 343.6 653 345.6 649.8 346"/>
<path fill="#030303" d="M628 345.2C616.5 346.6 608.4 354.6 606 364.6C610.6 357.4 617.4 351.6 628 349.2Z"/>
<path fill="#030303" d="M650.8 345.2C662.3 346.6 670.4 354.6 672.8 364.6C668.2 357.4 661.4 351.6 650.8 349.2Z"/>
<path fill="none" stroke="#030303" stroke-width="1.3" stroke-linecap="round" d="M637.6 355C637.6 362 638.4 369 639.4 374.5"/>
<g fill="#e8f3fb" stroke="#c9cdd1" stroke-width=".6">
<circle cx="327.2" cy="99.6" r="4.5"/><circle cx="952.8" cy="99.6" r="4.5"/><circle cx="327.2" cy="581" r="4.5"/><circle cx="952.8" cy="581" r="4.5"/>
<rect x="633" y="97.3" width="14" height="5.4" rx="2.7"/><rect x="633" y="578.3" width="14" height="5.4" rx="2.7"/>
<rect x="324.2" y="333" width="6" height="14.4" rx="3"/><rect x="949.8" y="333" width="6" height="14.4" rx="3"/>
<circle cx="640" cy="82.2" r="9" stroke="none"/>
</g>
<g fill="none" stroke="#14161b" stroke-width="1.2" stroke-linecap="round" stroke-linejoin="round"><path d="M635.9 82.9A4.1 4.1 0 0 1 643.1 79.5M644.1 81.7A4.1 4.1 0 0 1 636.9 85.1"/><path d="M643.5 77.3V79.9H640.9M636.5 87.3V84.7H639.1" stroke-width="1.05"/></g>
</svg>
</body></html>
